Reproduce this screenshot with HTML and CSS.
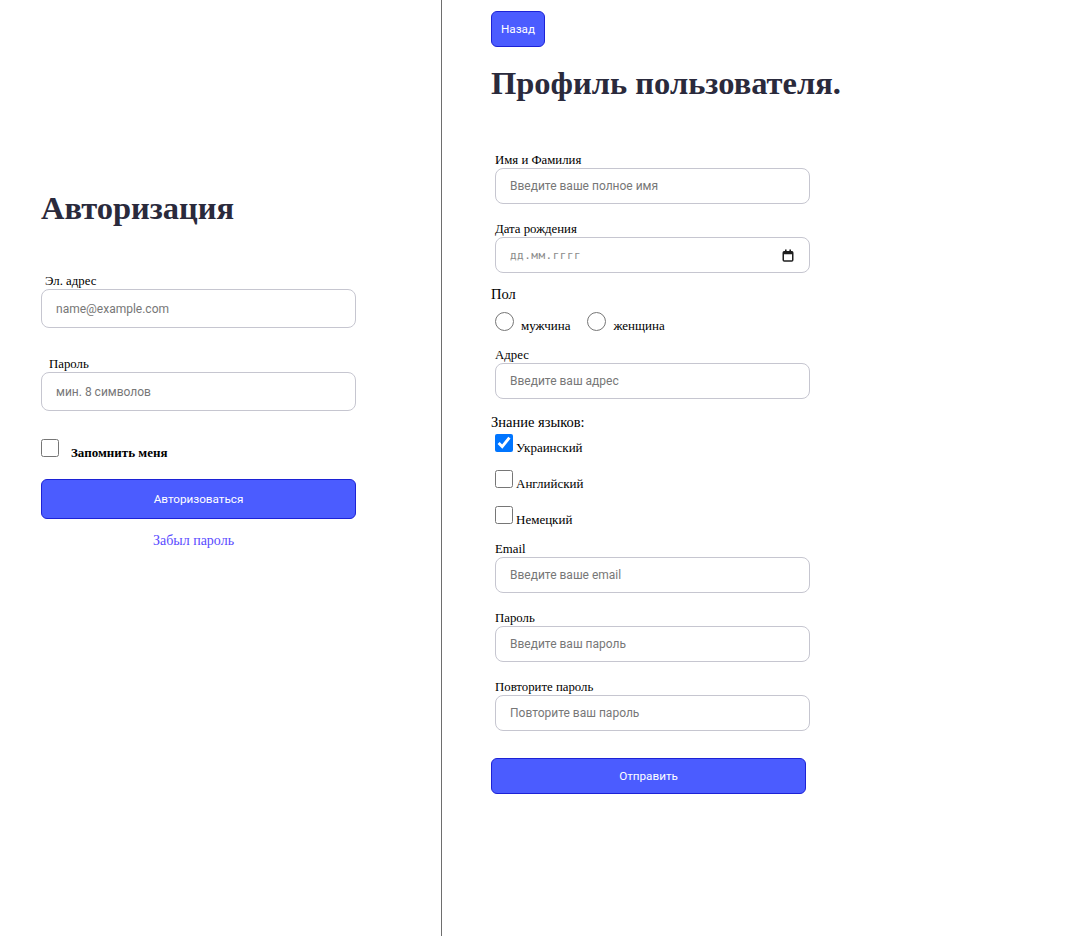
FILE: index.html
```html
<!DOCTYPE html>
<html lang="ru">
<head>
<meta charset="utf-8">
<title>Авторизация</title>
<link rel="stylesheet" href="styles.css">
</head>
<body>
<div class="page">
  <section class="login">
    <h1 class="title">Авторизация</h1>
    <label class="label label-email" for="l-email">Эл. адрес</label>
    <input class="input input-tall" id="l-email" type="text" placeholder="name@example.com">
    <label class="label label-pass" for="l-pass">Пароль</label>
    <input class="input input-tall" id="l-pass" type="password" placeholder="мин. 8 символов">
    <div class="remember">
      <input class="check" type="checkbox" id="remember">
      <label class="remember-label" for="remember">Запомнить меня</label>
    </div>
    <button class="btn btn-wide btn-tall" type="button">Авторизоваться</button>
    <a class="forgot" href="#">Забыл пароль</a>
  </section>

  <section class="profile">
    <button class="btn btn-back" type="button">Назад</button>
    <h1 class="title title-profile">Профиль пользователя.</h1>

    <div class="field field-first">
      <label class="label" for="p-name">Имя и Фамилия</label>
      <input class="input" id="p-name" type="text" placeholder="Введите ваше полное имя">
    </div>
    <div class="field">
      <label class="label" for="p-date">Дата рождения</label>
      <div class="input date">
        <input class="date-text" id="p-date" type="text" placeholder="дд.мм.гггг">
        <svg class="cal" width="12" height="13" viewBox="0 0 12 13" aria-hidden="true">
          <rect x="1.25" y="2.75" width="9.5" height="9.25" rx="1" fill="none" stroke="#1f1f1f" stroke-width="1.5"/>
          <rect x="1.25" y="2.75" width="9.5" height="2.5" fill="#1f1f1f"/>
          <rect x="3" y="0.5" width="1.6" height="2.6" fill="#1f1f1f"/>
          <rect x="7.4" y="0.5" width="1.6" height="2.6" fill="#1f1f1f"/>
        </svg>
      </div>
    </div>

    <div class="group-title group-gender">Пол</div>
    <div class="radios">
      <input class="radio" type="radio" name="gender" id="g-m">
      <label class="radio-label" for="g-m">мужчина</label>
      <input class="radio radio-second" type="radio" name="gender" id="g-f">
      <label class="radio-label" for="g-f">женщина</label>
    </div>

    <div class="field field-address">
      <label class="label" for="p-addr">Адрес</label>
      <input class="input" id="p-addr" type="text" placeholder="Введите ваш адрес">
    </div>

    <div class="group-title group-langs">Знание языков:</div>
    <div class="langs">
      <div class="lang">
        <input class="check" type="checkbox" id="lang-ua" checked>
        <label class="lang-label" for="lang-ua">Украинский</label>
      </div>
      <div class="lang">
        <input class="check" type="checkbox" id="lang-en">
        <label class="lang-label" for="lang-en">Английский</label>
      </div>
      <div class="lang">
        <input class="check" type="checkbox" id="lang-de">
        <label class="lang-label" for="lang-de">Немецкий</label>
      </div>
    </div>

    <div class="field field-email">
      <label class="label" for="p-email">Email</label>
      <input class="input" id="p-email" type="text" placeholder="Введите ваше email">
    </div>
    <div class="field">
      <label class="label" for="p-pass">Пароль</label>
      <input class="input" id="p-pass" type="password" placeholder="Введите ваш пароль">
    </div>
    <div class="field">
      <label class="label" for="p-pass2">Повторите пароль</label>
      <input class="input" id="p-pass2" type="password" placeholder="Повторите ваш пароль">
    </div>

    <button class="btn btn-wide btn-submit" type="button">Отправить</button>
  </section>
</div>
</body>
</html>
```

FILE: styles.css
```css
* {
  box-sizing: border-box;
}

html, body {
  margin: 0;
  padding: 0;
  background: #ffffff;
}

body {
  font-family: "Liberation Serif", "Times New Roman", serif;
  color: #000000;
}

.page {
  display: flex;
  min-height: 936px;
}

.login {
  width: 442px;
  flex: none;
  border-right: 1px solid #6e6e6e;
  padding: 190px 0 0 41px;
  display: flex;
  flex-direction: column;
  align-items: flex-start;
}

.profile {
  flex: 1;
  padding: 11px 0 0 49px;
  display: flex;
  flex-direction: column;
  align-items: flex-start;
}

.title {
  margin: 0;
  font-family: "Liberation Serif", "Times New Roman", serif;
  font-weight: bold;
  font-size: 32.5px;
  line-height: 37px;
  color: #2a2a3c;
}

.title-profile {
  margin-top: 18px;
}

.label {
  display: block;
  font-size: 12.8px;
  line-height: 15px;
  color: #000000;
}

.label-email {
  margin: 47px 0 0 4px;
}

.label-pass {
  margin: 29px 0 0 8px;
}

.input {
  display: block;
  width: 315px;
  height: 36px;
  margin: 0;
  padding: 0 14px;
  border: 1px solid #c6c6d0;
  border-radius: 8px;
  background: #ffffff;
  font-family: Roboto, "Liberation Sans", Arial, sans-serif;
  font-size: 12px;
  color: #222222;
  outline: none;
}

.input::placeholder {
  color: #777777;
}

.input-tall {
  height: 39px;
}

.remember {
  display: flex;
  align-items: flex-start;
  height: 18px;
  margin-top: 28px;
}

.check {
  width: 18px;
  height: 18px;
  margin: 0;
  flex: none;
}

.remember-label {
  margin: 6px 0 0 12px;
  font-size: 13px;
  line-height: 15px;
  font-weight: bold;
}

.btn {
  display: block;
  margin: 0;
  padding: 0 10px;
  background: #4b5cff;
  border: 1px solid #1c22d6;
  border-radius: 6px;
  color: #ffffff;
  font-family: Roboto, "Liberation Sans", Arial, sans-serif;
  font-size: 11.7px;
  cursor: pointer;
}

.btn-wide {
  width: 315px;
}

.btn-tall {
  height: 40px;
  margin-top: 22px;
}

.forgot {
  display: block;
  width: 315px;
  margin-top: 14px;
  padding-right: 10px;
  text-align: center;
  font-size: 14px;
  line-height: 16px;
  color: #5a4cff;
  text-decoration: none;
}

.btn-back {
  width: 54px;
  height: 36px;
  padding: 0;
}

.field {
  margin: 18px 0 0 4px;
}

.field-first {
  margin-top: 51px;
}

.field-address {
  margin-top: 17px;
}

.field-email {
  margin-top: 18px;
}

.date {
  display: flex;
  align-items: center;
  justify-content: space-between;
  padding: 0 15px 0 14px;
}

.date-text {
  border: none;
  outline: none;
  padding: 0;
  margin: 0;
  width: 120px;
  font-family: "DejaVu Sans Mono", "Liberation Mono", monospace;
  font-size: 11px;
  letter-spacing: 0.5px;
  background: transparent;
}

.date-text::placeholder {
  color: #8a8a8a;
}

.cal {
  display: block;
  flex: none;
}

.group-title {
  font-size: 14.5px;
  line-height: 18px;
}

.group-gender {
  margin-top: 12px;
}

.radios {
  display: flex;
  align-items: flex-start;
  height: 19px;
  margin: 9px 0 0 4px;
}

.radio {
  width: 19px;
  height: 19px;
  margin: 0;
  flex: none;
}

.radio-second {
  margin-left: 17px;
}

.radio-label {
  margin: 6px 0 0 7px;
  font-size: 13px;
  line-height: 15px;
}

.group-langs {
  margin-top: 14px;
}

.langs {
  display: flex;
  flex-direction: column;
  gap: 18px;
  margin: 3px 0 0 4px;
}

.lang {
  display: flex;
  align-items: flex-start;
  height: 18px;
}

.lang-label {
  margin: 6px 0 0 3px;
  font-size: 13px;
  line-height: 15px;
}

.btn-submit {
  height: 36px;
  margin-top: 27px;
}
```
